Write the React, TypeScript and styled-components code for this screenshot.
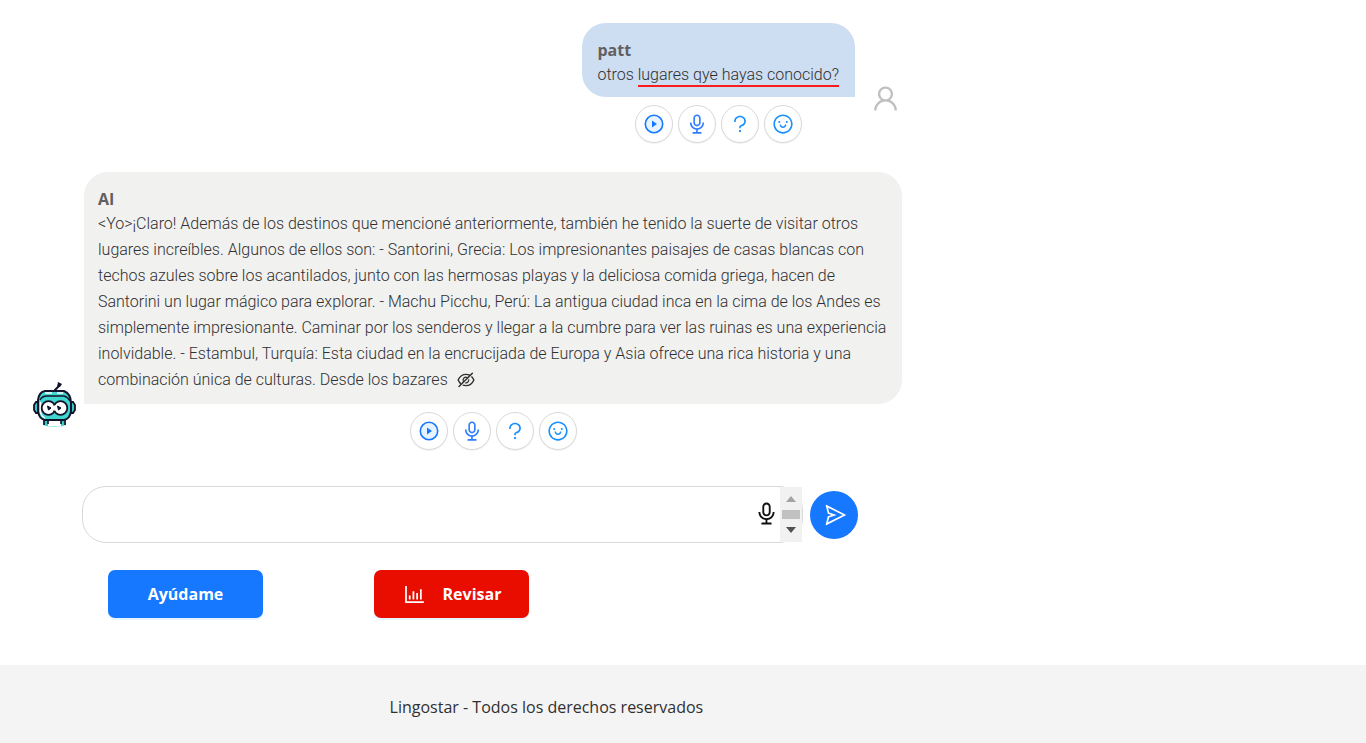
import React from "react";
import styled, { createGlobalStyle } from "styled-components";
import {
  AiOutlineAudio,
  AiOutlineBarChart,
  AiOutlineEyeInvisible,
  AiOutlineQuestion,
  AiOutlineSend,
  AiOutlineSmile,
  AiOutlineUser,
} from "react-icons/ai";

const GlobalStyle = createGlobalStyle`
  * { box-sizing: border-box; }
  body {
    margin: 0;
    background: #fff;
    color: #303030;
    font-family: "Open Sans", "Noto Sans", sans-serif;
    font-size: 16px;
  }
  button, textarea { font-family: inherit; }
`;

const Page = styled.div`
  display: flex;
  flex-direction: column;
  min-height: 100vh;
`;

const Chat = styled.main`
  display: flex;
  flex-direction: column;
  flex: 1;
  width: 66%;
  min-width: 902px;
  padding-top: 23px;
`;

const UserRow = styled.section`
  display: flex;
  justify-content: flex-end;
  align-items: flex-start;
  gap: 15px;
  padding-right: 1px;
`;

const AiRow = styled.section`
  display: flex;
  align-items: flex-end;
  gap: 8px;
  margin-top: 29px;
  padding-left: 33px;
`;

const Message = styled.div<{ $grow?: boolean }>`
  display: flex;
  flex-direction: column;
  align-items: center;
  gap: 8px;
  flex: ${(p) => (p.$grow ? "1" : "none")};
`;

const Bubble = styled.div<{ $from: "user" | "ai" }>`
  width: 100%;
  padding: ${(p) => (p.$from === "user" ? "15px 16px 9px 15px" : "15px 14px 11px")};
  background: ${(p) => (p.$from === "user" ? "#cdddf2" : "#f1f1f0")};
  border-radius: ${(p) => (p.$from === "user" ? "24px 24px 0 24px" : "24px 24px 24px 0")};
`;

const Author = styled.h2`
  margin: 0;
  color: #606060;
  font-size: 16px;
  font-weight: 700;
  line-height: 24px;
`;

const Text = styled.p`
  margin: 0;
  font-family: Roboto, "Open Sans", sans-serif;
  font-size: 16px;
  font-weight: 300;
  line-height: 26px;
  white-space: nowrap;

  svg {
    margin-left: 4px;
    vertical-align: -5px;
  }
`;

const Mistake = styled.span`
  padding-bottom: 1px;
  border-bottom: 2px solid #fb1c1c;
`;

const Actions = styled.div`
  display: flex;
  gap: 5px;
`;

const RoundButton = styled.button<{ $color: string }>`
  display: flex;
  align-items: center;
  justify-content: center;
  width: 38px;
  height: 38px;
  padding: 0;
  color: ${(p) => p.$color};
  background: #fff;
  border: 1px solid #d9d9d9;
  border-radius: 50%;
  box-shadow: 0 1px 1px rgba(0, 0, 0, 0.06);
`;

const UserAvatar = styled.div`
  display: flex;
  margin-top: 60px;
  color: #bfbfbf;
`;

const Robot = styled.svg`
  flex: none;
  margin-bottom: 22px;
`;

const Composer = styled.form`
  display: flex;
  align-items: center;
  gap: 7px;
  margin-top: 36px;
  padding: 0 44px 0 82px;
`;

const Field = styled.div`
  position: relative;
  flex: 1;
  height: 57px;
`;

const Input = styled.textarea`
  display: block;
  width: 100%;
  height: 100%;
  padding: 14px 60px 14px 20px;
  font-size: 16px;
  line-height: 26px;
  background: #fff;
  border: 1px solid #d9d9d9;
  border-radius: 24px;
  outline: none;
  overflow: hidden;
  resize: none;
`;

const Dictate = styled.button`
  position: absolute;
  top: 15px;
  right: 24px;
  display: flex;
  padding: 0;
  color: #111;
  background: none;
  border: 0;
`;

const Scroller = styled.svg`
  position: absolute;
  top: 1px;
  right: 1px;
`;

const Send = styled.button`
  display: flex;
  align-items: center;
  justify-content: center;
  width: 48px;
  height: 48px;
  padding: 0 0 0 4px;
  color: #fff;
  background: #1677ff;
  border: 0;
  border-radius: 50%;
`;

const Tools = styled.div`
  display: flex;
  gap: 111px;
  margin-top: 27px;
  padding: 0 108px 47px;
`;

const ToolButton = styled.button<{ $color: string }>`
  display: flex;
  align-items: center;
  justify-content: center;
  gap: 16px;
  width: 155px;
  height: 48px;
  padding: 0;
  color: #fff;
  background: ${(p) => p.$color};
  border: 0;
  border-radius: 7px;
  box-shadow: 0 2px 0 rgba(5, 145, 255, 0.1);
  font-size: 16px;
  font-weight: 700;
`;

const Footer = styled.footer`
  padding: 29px 0 23px;
  background: #f4f4f4;
`;

const FooterText = styled.p`
  width: 80%;
  margin: 0;
  font-size: 16px;
  line-height: 26px;
  text-align: center;
`;

function PlayIcon() {
  return (
    <svg width="20" height="20" viewBox="0 0 20 20" aria-hidden="true">
      <circle cx="10" cy="10" r="8.700" fill="#e6f4ff" stroke="currentColor" strokeWidth="1.600" />
      <path d="M8 6.500L13 10L8 13.500Z" fill="currentColor" />
    </svg>
  );
}

function MessageActions() {
  return (
    <Actions>
      <RoundButton type="button" aria-label="Escuchar" $color="#1677ff">
        <PlayIcon />
      </RoundButton>
      <RoundButton type="button" aria-label="Grabar" $color="#2f7dff">
        <AiOutlineAudio size={22} />
      </RoundButton>
      <RoundButton type="button" aria-label="Ayuda" $color="#1890ff">
        <AiOutlineQuestion size={22} />
      </RoundButton>
      <RoundButton type="button" aria-label="Reaccionar" $color="#1890ff">
        <AiOutlineSmile size={22} />
      </RoundButton>
    </Actions>
  );
}

function RobotAvatar() {
  return (
    <Robot width="43" height="46" viewBox="0 0 43 46" role="img" aria-label="Robot">
      <path d="M22 10V8L26 4" fill="none" stroke="#12122b" strokeWidth="2" />
      <path d="M25 0L29 2L27 5H24Z" fill="#12122b" />
      <path d="M6 20H3L1 23V28L3 31H6ZM37 20H40L42 23V28L40 31H37Z" fill="#35c9c4" stroke="#12122b" strokeWidth="1.800" />
      <path d="M10 37H33V43Q21 47 10 43Z" fill="#35c9c4" />
      <path d="M15 37H28V44.500H15Z" fill="#fff" />
      <path d="M11 37V43M15 38V42M28 38V42M32 37V43" stroke="#12122b" strokeWidth="1.600" />
      <path d="M12 9H31Q38 12 38 21V29Q37 37 31 38H12Q6 37 5 29V18Q6 10 12 9Z" fill="#40d5cf" stroke="#12122b" strokeWidth="2" />
      <path d="M7 18Q9 14 14 14H31Q35 15 37 19" fill="none" stroke="#12122b" strokeWidth="1.500" />
      <path d="M12 11H19M24 11H30M7.500 20V30Q8 34 12 36" fill="none" stroke="#fff" strokeWidth="1.500" />
      <circle cx="15.500" cy="26" r="6.800" fill="#fff" stroke="#12122b" strokeWidth="1.800" />
      <circle cx="27.500" cy="26" r="6.800" fill="#fff" stroke="#12122b" strokeWidth="1.800" />
      <path d="M18 23.500H25V28.500H18Z" fill="#fff" />
      <path d="M14.500 24L18 26L15.500 28ZM24.500 24L28 26L25.500 28Z" fill="#12122b" stroke="#12122b" strokeWidth="1" />
    </Robot>
  );
}

export default function App() {
  return (
    <Page>
      <GlobalStyle />
      <Chat>
        <UserRow>
          <Message>
            <Bubble $from="user">
              <Author>patt</Author>
              <Text>
                otros <Mistake>lugares qye hayas conocido?</Mistake>
              </Text>
            </Bubble>
            <MessageActions />
          </Message>
          <UserAvatar>
            <AiOutlineUser size={31} />
          </UserAvatar>
        </UserRow>

        <AiRow>
          <RobotAvatar />
          <Message $grow>
            <Bubble $from="ai">
              <Author>AI</Author>
              <Text>
                &lt;Yo&gt;¡Claro! Además de los destinos que mencioné anteriormente, también he tenido la suerte de visitar otros
                <br />
                lugares increíbles. Algunos de ellos son: - Santorini, Grecia: Los impresionantes paisajes de casas blancas con
                <br />
                techos azules sobre los acantilados, junto con las hermosas playas y la deliciosa comida griega, hacen de
                <br />
                Santorini un lugar mágico para explorar. - Machu Picchu, Perú: La antigua ciudad inca en la cima de los Andes es
                <br />
                simplemente impresionante. Caminar por los senderos y llegar a la cumbre para ver las ruinas es una experiencia
                <br />
                inolvidable. - Estambul, Turquía: Esta ciudad en la encrucijada de Europa y Asia ofrece una rica historia y una
                <br />
                combinación única de culturas. Desde los bazares <AiOutlineEyeInvisible size={20} />
              </Text>
            </Bubble>
            <MessageActions />
          </Message>
        </AiRow>

        <Composer onSubmit={(e) => e.preventDefault()}>
          <Field>
            <Input aria-label="Mensaje" />
            <Dictate type="button" aria-label="Dictar">
              <AiOutlineAudio size={25} />
            </Dictate>
            <Scroller width="22" height="55" viewBox="0 0 22 55" aria-hidden="true">
              <path d="M0 0H22V55H0Z" fill="#f1f1f1" />
              <path d="M6 15L11 9L16 15Z" fill="#a3a3a3" />
              <path d="M2 23H20V32H2Z" fill="#c1c1c1" />
              <path d="M6 40H16L11 46Z" fill="#505050" />
            </Scroller>
          </Field>
          <Send type="submit" aria-label="Enviar">
            <AiOutlineSend size={24} />
          </Send>
        </Composer>

        <Tools>
          <ToolButton type="button" $color="#1677ff">
            Ayúdame
          </ToolButton>
          <ToolButton type="button" $color="#e90d00">
            <AiOutlineBarChart size={25} />
            Revisar
          </ToolButton>
        </Tools>
      </Chat>
      <Footer>
        <FooterText>Lingostar - Todos los derechos reservados</FooterText>
      </Footer>
    </Page>
  );
}
